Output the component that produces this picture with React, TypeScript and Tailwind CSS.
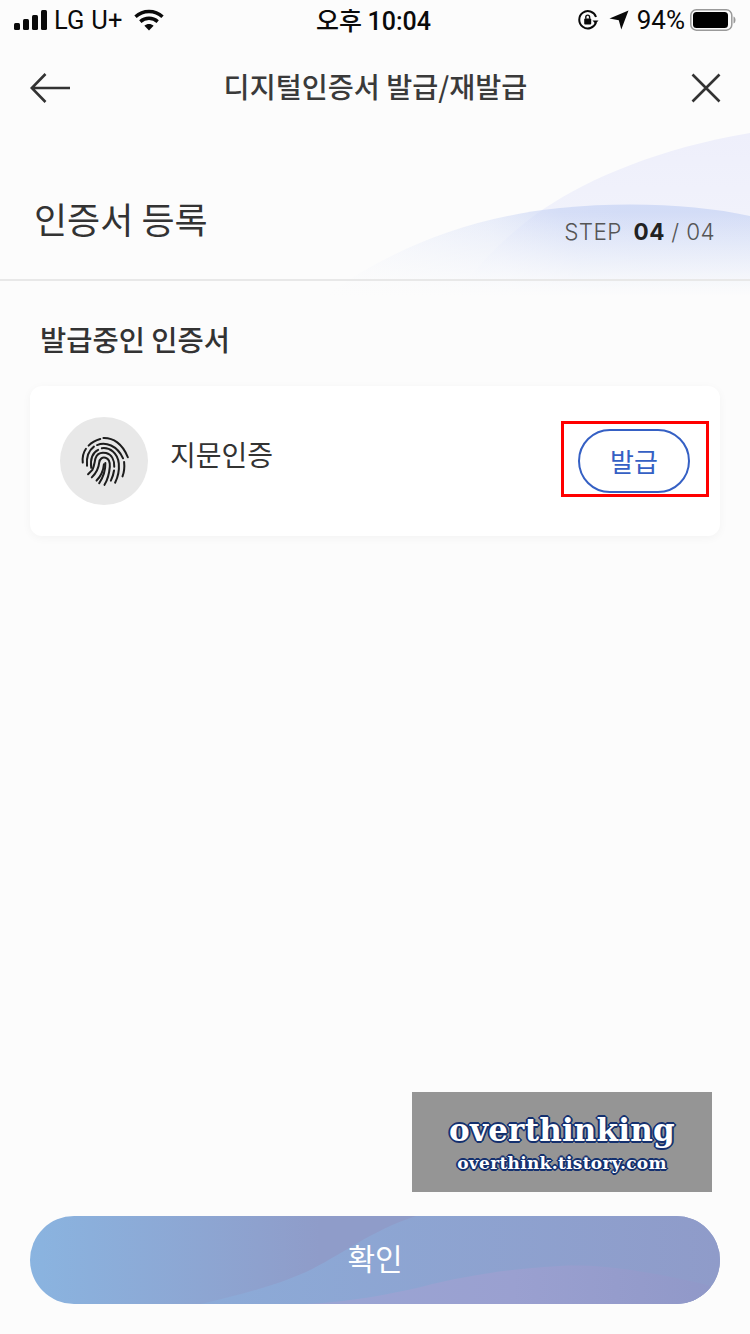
const kr = "font-['Noto_Sans_CJK_KR','Noto_Sans',sans-serif]";

function Signal() {
  return (
    <svg width="34" height="20" viewBox="0 0 34 20" fill="#0a0a0a">
      <rect x="0" y="13" width="6" height="7" rx="1.5" />
      <rect x="9" y="9" width="6" height="11" rx="1.5" />
      <rect x="18" y="5" width="6" height="15" rx="1.5" />
      <rect x="27" y="0" width="6" height="20" rx="1.5" />
    </svg>
  );
}

function Wifi() {
  return (
    <svg width="30" height="22" viewBox="0 0 30 22" fill="none" stroke="#0a0a0a" strokeWidth="3.4">
      <path d="M1.5 7.8C9 .8 21 .8 28.5 7.8" />
      <path d="M6.3 12.6c5-4.4 12.4-4.4 17.4 0" />
      <path d="M15 21.5l-4.6-4.8c2.6-2.2 6.6-2.2 9.2 0z" fill="#0a0a0a" stroke="none" />
    </svg>
  );
}

function RotationLock() {
  return (
    <svg width="22" height="22" viewBox="0 0 22 22" fill="none">
      <path d="M19 13.5A8.6 8.6 0 1 1 19 8" stroke="#0a0a0a" strokeWidth="2" />
      <path d="M15.5 11.5h6L18.5 15z" fill="#0a0a0a" />
      <rect x="7.2" y="9.6" width="7" height="6" rx="1" fill="#0a0a0a" />
      <path d="M8.8 9.8V8a1.9 1.9 0 0 1 3.8 0v1.8" stroke="#0a0a0a" strokeWidth="1.4" />
    </svg>
  );
}

function Location() {
  return (
    <svg width="20" height="20" viewBox="0 0 20 20" fill="#0a0a0a">
      <path d="M19.5.5 12.3 19.6 9.8 10.2.5 8.6z" />
    </svg>
  );
}

function Battery() {
  return (
    <svg width="46" height="22" viewBox="0 0 46 22" fill="none">
      <rect x="0.8" y="0.8" width="41" height="20.4" rx="5.5" stroke="#9a9a9a" strokeWidth="1.5" />
      <rect x="3" y="3" width="35" height="16" rx="3.5" fill="#000" />
      <path d="M43.5 7.5c1.5.5 2 2 2 3.5s-.5 3-2 3.5z" fill="#9a9a9a" />
    </svg>
  );
}

function FingerprintIcon() {
  return (
    <svg width="53" height="53" viewBox="0 0 50 50" fill="none" stroke="#1d1d1d" strokeWidth="1.9" strokeLinecap="round">
      <path d="M4.5 26C4 21 5 16.5 7.5 13" />
      <path d="M10 10C13 7 16.5 5 21 3.8" />
      <path d="M24 2.8C33 2.5 42 8 47 21" />
      <path d="M8.5 29C7.8 22 9 15.5 15 11" />
      <path d="M18 9.5C26 6 37 10 42.5 22" />
      <path d="M43.5 25.5C44 30 43.5 35 42 39" />
      <path d="M12.5 31C11.5 23 13 17 19 14" />
      <path d="M22.5 12.5C30 11.5 37.5 17 38.5 27C39 33 38 39 35 45" />
      <path d="M9.5 37L13.5 33C15.5 29 15.5 26 16.5 22C18 17.5 22 16 26.5 17C32 18.5 34.5 24 34.2 30" />
      <path d="M34 33.5C33.5 37 32.5 40 31 43" />
      <path d="M13 40C17 36 19.5 31 20 26C20.5 22.5 23 20.5 26 21.5C29.5 22.5 30.2 26.5 30 30C29.5 36 28 42 25 47" />
      <path d="M17.5 43C21 39.5 24 33 24.5 27.5" />
      <path d="M25.8 26.5C26 33 24 39.5 20 45.5" />
    </svg>
  );
}

export default function App() {
  return (
    <div className={`relative w-[750px] h-[1334px] overflow-hidden bg-[#fcfcfc] flex flex-col ${kr}`}>
      <div className="flex items-center justify-between h-[40px] pl-[14px] pr-[14px] text-[#0a0a0a]">
        <div className="flex items-center w-[230px]">
          <Signal />
          <span className="ml-[6px] text-[25.5px] font-['Roboto',sans-serif] tracking-[0.2px]">LG U+</span>
          <span className="ml-[11px]"><Wifi /></span>
        </div>
        <span className={`text-[25px] font-medium leading-none ml-[-3px] ${kr}`}>오후 <span className="font-['Roboto',sans-serif]">10:04</span></span>
        <div className="flex items-center justify-end w-[230px]">
          <RotationLock />
          <span className="ml-[10px]"><Location /></span>
          <span className="ml-[8px] text-[26px] font-['Roboto',sans-serif]">94%</span>
          <span className="ml-[5px]"><Battery /></span>
        </div>
      </div>

      <div className="flex items-center justify-between h-[95px] pl-[30px] pr-[29px]">
        <div className="w-[40px] flex justify-start">
          <svg width="40" height="32" viewBox="0 0 40 32" fill="none" stroke="#333" strokeWidth="2.6">
            <path d="M40 16H2M15.5 2 1.8 16l13.7 14" />
          </svg>
        </div>
        <h1 className="text-[28.3px] font-medium text-[#3a3a3a] leading-none mb-[3px]">디지털인증서 발급/재발급</h1>
        <div className="w-[40px] flex justify-end">
          <svg width="30" height="30" viewBox="0 0 30 30" fill="none" stroke="#333" strokeWidth="2.6">
            <path d="M1.5 1.5l27 27M28.5 1.5l-27 27" />
          </svg>
        </div>
      </div>

      <div className="relative h-[144px] flex items-end justify-between pl-[34px] pr-[35px] pb-[36px]">
        <svg className="absolute left-0 top-[-3px]" width="750" height="172" viewBox="0 132 750 172" fill="none">
          <defs>
            <linearGradient id="a" x1="0" y1="133" x2="0" y2="285" gradientUnits="userSpaceOnUse">
              <stop offset="0" stopColor="#eeeffb" />
              <stop offset="0.55" stopColor="#f1f2fb" />
              <stop offset="1" stopColor="#fafbfd" />
            </linearGradient>
            <linearGradient id="b" x1="340" y1="290" x2="620" y2="200" gradientUnits="userSpaceOnUse">
              <stop offset="0" stopColor="#c9d5f5" stopOpacity="0.08" />
              <stop offset="0.55" stopColor="#c9d5f5" stopOpacity="0.4" />
              <stop offset="0.8" stopColor="#c9d5f5" stopOpacity="0.7" />
              <stop offset="1" stopColor="#c9d5f5" stopOpacity="0.75" />
            </linearGradient>
            <linearGradient id="f" x1="0" y1="212" x2="0" y2="296" gradientUnits="userSpaceOnUse">
              <stop offset="0" stopColor="#fcfcfc" stopOpacity="0" />
              <stop offset="0.85" stopColor="#fcfcfc" stopOpacity="0.88" />
              <stop offset="1" stopColor="#fcfcfc" stopOpacity="1" />
            </linearGradient>
          </defs>
          <path d="M750 133C660 148 590 178 545 208C510 232 485 258 462 286L750 286Z" fill="url(#a)" />
          <path d="M320 300C380 255 460 218 560 208C630 201 700 205 750 216V300H320Z" fill="url(#b)" />
          <rect x="300" y="205" width="450" height="99" fill="url(#f)" />
        </svg>
        <h2 className="relative text-[36px] leading-none text-[#333] mb-[7px]">인증서 등록</h2>
        <div className="relative flex items-baseline text-[22.5px] leading-none font-['Inter',sans-serif] text-[#555]">
          <span className="font-light tracking-[0.3px]">STEP</span>
          <span className="ml-[12px] font-bold text-[#222] tracking-[0.6px]">04</span>
          <span className="ml-[6px] font-light tracking-[0.4px]">/ 04</span>
        </div>
      </div>
      <div className="relative h-[2px] bg-[#e8e8e8]" />

      <div className="relative mt-[44px] pl-[40px] text-[28.5px] font-medium leading-[28px] text-[#333]">발급중인 인증서</div>

      <div className="relative mt-[33px] mx-[30px] h-[150px] rounded-[12px] bg-white shadow-[0_2px_10px_rgba(0,0,0,0.04)] flex items-start pl-[30px] pr-[30px] pt-[31px]">
        <div className="w-[88px] h-[88px] rounded-full bg-[#e8e8e8] flex items-center justify-center shrink-0">
          <FingerprintIcon />
        </div>
        <span className="ml-[22px] mt-[23px] text-[28px] leading-none text-[#333]">지문인증</span>
        <div className="ml-auto mt-[12px] w-[112px] h-[64px] rounded-full border-2 border-[#3560c4] flex items-center justify-center text-[26px] leading-none text-[#3560c4]">
          발급
        </div>
        <div className="absolute left-[531px] top-[35px] w-[148px] h-[76px] border-[3px] border-[#ff0000]" />
      </div>

      <div className="mt-auto mb-[30px] mx-[30px] h-[88px] rounded-full overflow-hidden relative flex items-center justify-center bg-[linear-gradient(90deg,#8ab4e0_0%,#8f9cc9_42%,#8f9cc9_100%)]">
        <svg className="absolute inset-0" width="690" height="88" viewBox="0 0 690 88" fill="none">
          <defs>
            <linearGradient id="c" x1="170" y1="0" x2="690" y2="0" gradientUnits="userSpaceOnUse">
              <stop offset="0" stopColor="#8cabd8" />
              <stop offset="1" stopColor="#8f9bc9" />
            </linearGradient>
            <linearGradient id="d" x1="276" y1="0" x2="690" y2="0" gradientUnits="userSpaceOnUse">
              <stop offset="0" stopColor="#9aa5d4" />
              <stop offset="0.5" stopColor="#9aa0d0" />
              <stop offset="1" stopColor="#9098c8" />
            </linearGradient>
          </defs>
          <path d="M171 88C205 80 245 70 276 56C310 40 340 15 386 0H690V88Z" fill="url(#c)" />
          <path d="M276 88C320 86 360 78 391 71C440 58 490 52 530 50C560 48 610 52 690 72V88Z" fill="url(#d)" />
        </svg>
        <span className="relative text-[30px] leading-none text-white mb-[6px]">확인</span>
      </div>

      <div className="absolute left-[412px] top-[1092px] w-[300px] h-[100px] bg-[#959595] flex flex-col items-center justify-center pt-[2px] font-['DejaVu_Serif',serif] font-bold text-white [text-shadow:-2px_0_0_#14306e,2px_0_0_#14306e,0_-2px_0_#14306e,0_2px_0_#14306e,-1px_-1px_0_#14306e,1px_1px_0_#14306e,-1px_1px_0_#14306e,1px_-1px_0_#14306e]">
        <span className="text-[31px] leading-none tracking-[0.2px]">overthinking</span>
        <span className="text-[17px] leading-none tracking-[0.3px] mt-[9px]">overthink.tistory.com</span>
      </div>
    </div>
  );
}
